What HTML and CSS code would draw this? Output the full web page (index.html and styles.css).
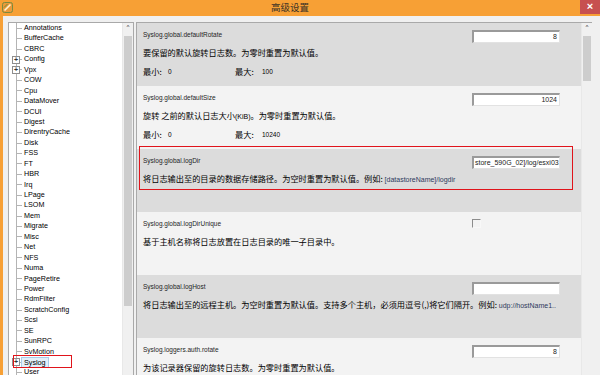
FILE: index.html
```html
<!DOCTYPE html>
<html lang="zh-CN">
<head>
    <meta charset="UTF-8">
    <title>高级设置</title>
    <link rel="stylesheet" href="styles.css">
</head>
<body>
    <div class="titlebar">
        <svg class="app-icon" width="11" height="11" viewBox="0 0 11 11">
            <rect x="0.5" y="0.5" width="10" height="10" rx="2" fill="#e99a3a" stroke="#7a8a3e"/>
            <path d="M2.5 8.5 L8.5 2.5" stroke="#fff3d6" stroke-width="1.6"/>
            <path d="M2 5.5 L5.5 2" stroke="#6f8a3a" stroke-width="1"/>
        </svg>
        <span class="title">高级设置</span>
        <span class="close">×</span>
    </div>

    <div class="frame">
        <div class="tree-pane">
            <ul class="tree">
                <li><span class="twig"></span>Annotations</li>
                <li><span class="twig"></span>BufferCache</li>
                <li><span class="twig"></span>CBRC</li>
                <li><span class="twig"><span class="expander">+</span></span>Config</li>
                <li><span class="twig"><span class="expander">+</span></span>Vpx</li>
                <li><span class="twig"></span>COW</li>
                <li><span class="twig"></span>Cpu</li>
                <li><span class="twig"></span>DataMover</li>
                <li><span class="twig"></span>DCUI</li>
                <li><span class="twig"></span>Digest</li>
                <li><span class="twig"></span>DirentryCache</li>
                <li><span class="twig"></span>Disk</li>
                <li><span class="twig"></span>FSS</li>
                <li><span class="twig"></span>FT</li>
                <li><span class="twig"></span>HBR</li>
                <li><span class="twig"></span>Irq</li>
                <li><span class="twig"></span>LPage</li>
                <li><span class="twig"></span>LSOM</li>
                <li><span class="twig"></span>Mem</li>
                <li><span class="twig"></span>Migrate</li>
                <li><span class="twig"></span>Misc</li>
                <li><span class="twig"></span>Net</li>
                <li><span class="twig"></span>NFS</li>
                <li><span class="twig"></span>Numa</li>
                <li><span class="twig"></span>PageRetire</li>
                <li><span class="twig"></span>Power</li>
                <li><span class="twig"></span>RdmFilter</li>
                <li><span class="twig"></span>ScratchConfig</li>
                <li><span class="twig"></span>Scsi</li>
                <li><span class="twig"></span>SE</li>
                <li><span class="twig"></span>SunRPC</li>
                <li><span class="twig"></span>SvMotion</li>
                <li class="marked"><span class="twig"><span class="expander">+</span></span><span class="selected">Syslog</span><span class="red-mark"></span></li>
                <li><span class="twig"></span>User</li>
            </ul>
            <div class="vscroll">
                <span class="arrow">˄</span>
                <span class="thumb tree-thumb"></span>
            </div>
        </div>

        <div class="content-pane">
            <div class="settings">
                <div class="setting dark">
                    <div class="head">
                        <span class="name">Syslog.global.defaultRotate</span>
                        <span class="field num">8</span>
                    </div>
                    <div class="desc">要保留的默认旋转日志数。为零时重置为默认值。</div>
                    <div class="range">
                        <span class="min"><span class="lbl">最小:</span><span class="val">0</span></span>
                        <span class="lbl wide">最大:</span><span class="val">100</span>
                    </div>
                </div>

                <div class="setting light">
                    <div class="head">
                        <span class="name">Syslog.global.defaultSize</span>
                        <span class="field num">1024</span>
                    </div>
                    <div class="desc">旋转 之前的默认日志大小<span class="en">(KiB)</span>。为零时重置为默认值。</div>
                    <div class="range">
                        <span class="min"><span class="lbl">最小:</span><span class="val">0</span></span>
                        <span class="lbl wide">最大:</span><span class="val">10240</span>
                    </div>
                </div>

                <div class="setting dark marked">
                    <div class="head">
                        <span class="name">Syslog.global.logDir</span>
                        <span class="field text">store_590G_02]/log/esxi03<span class="caret"></span></span>
                    </div>
                    <div class="desc">将日志输出至的目录的数据存储路径。为空时重置为默认值。例如: <span class="en code">[datastoreName]/logdir</span></div>
                    <span class="red-box"></span>
                </div>

                <div class="setting light">
                    <div class="head">
                        <span class="name">Syslog.global.logDirUnique</span>
                        <span class="check-cell"><span class="checkbox"></span></span>
                    </div>
                    <div class="desc">基于主机名称将日志放置在日志目录的唯一子目录中。</div>
                </div>

                <div class="setting dark">
                    <div class="head">
                        <span class="name">Syslog.global.logHost</span>
                        <span class="field num"></span>
                    </div>
                    <div class="desc">将日志输出至的远程主机。为空时重置为默认值。支持多个主机，必须用逗号(,)将它们隔开。例如: <span class="en code">udp://hostName1..</span></div>
                </div>

                <div class="setting light">
                    <div class="head">
                        <span class="name">Syslog.loggers.auth.rotate</span>
                        <span class="field num">8</span>
                    </div>
                    <div class="desc">为该记录器保留的旋转日志数。为零时重置为默认值。</div>
                </div>
            </div>
            <div class="vscroll">
                <span class="arrow">˄</span>
                <span class="thumb content-thumb"></span>
            </div>
        </div>
    </div>
</body>
</html>
```

FILE: styles.css
```css
body {
    margin: 0;
    width: 600px;
    height: 375px;
    overflow: hidden;
    background: #f7a035;
    font-family: "Liberation Sans", "Noto Sans CJK SC", sans-serif;
    color: #000;
}
.titlebar {
    height: 16px;
    display: flex;
    align-items: center;
    position: relative;
}
.app-icon {
    margin-left: 2px;
    margin-top: -2px;
}
.title {
    flex: 1;
    text-align: center;
    font-family: "Noto Sans CJK SC", sans-serif;
    font-size: 9.5px;
    color: #3b3226;
    margin-left: -13px;
    margin-top: -2px;
}
.close {
    width: 20px;
    height: 14px;
    align-self: flex-start;
    background: #c75050;
    color: #fff;
    font-size: 11px;
    line-height: 13px;
    text-align: center;
    font-weight: bold;
}

/* window body */
.frame {
    height: 353px;
    display: flex;
    background: #f0f0f0;
    border-left: 3px solid #f7a035;
    padding: 6px 8px 0 5px;
}

/* left tree */
.tree-pane {
    width: 124px;
    display: flex;
    background: #fff;
    border: 1px solid #a9a9a9;
    border-bottom: none;
}
.tree {
    flex: 1;
    list-style: none;
    margin: 0;
    padding: 0 0 0 3px;
    font-size: 7.2px;
    overflow: hidden;
}
.tree li {
    height: 10.44px;
    line-height: 10.44px;
    display: flex;
    align-items: center;
    white-space: nowrap;
    background-image: linear-gradient(#b4b4b4, #b4b4b4), linear-gradient(#b4b4b4, #b4b4b4);
    background-size: 1px 100%, 6px 1px;
    background-position: 4px 0, 4px 50%;
    background-repeat: no-repeat;
}
.twig {
    width: 12px;
    flex: none;
    display: flex;
    align-items: center;
}
.expander {
    width: 6px;
    height: 6px;
    border: 1px solid #8e8e8e;
    background: #fff;
    font-size: 7px;
    line-height: 6px;
    text-align: center;
    font-weight: bold;
    color: #333;
}
.marked {
    position: relative;
}
.selected {
    margin-left: -3px;
    padding: 0 2px;
    line-height: 9px;
    background: #e3eff9;
    border: 1px solid #a9cbea;
}
.red-mark {
    position: absolute;
    left: 1px;
    top: -2px;
    width: 57px;
    height: 11px;
    border: 1.5px solid #e0141b;
}

/* scrollbars */
.vscroll {
    width: 10px;
    flex: none;
    display: flex;
    flex-direction: column;
    align-items: center;
    background: #f0f0f0;
    border-left: 1px solid #e8e8e8;
}
.arrow {
    height: 13px;
    font-size: 9px;
    line-height: 13px;
    color: #606060;
    font-family: "DejaVu Sans", sans-serif;
}
.thumb {
    width: 8px;
    background: #cdcdcd;
}
.tree-thumb {
    height: 270px;
}
.content-thumb {
    height: 45px;
}

/* right settings */
.content-pane {
    width: 455px;
    margin-left: 2px;
    display: flex;
    border-left: 1px solid #a9a9a9;
    border-top: 1px solid #a9a9a9;
    background: #f3f3f3;
}
.settings {
    flex: 1;
    overflow: hidden;
}
.setting {
    height: 63px;
    padding: 7px 0 0 6px;
    box-sizing: border-box;
}
.setting.dark {
    background: #dcdcdc;
}
.setting.light {
    background: #f3f3f3;
}
.head {
    height: 13px;
    display: flex;
    align-items: flex-start;
}
.name {
    flex: 1;
    font-size: 6.5px;
    line-height: 9px;
    color: #1e1e1e;
}
.field {
    width: 88px;
    height: 13px;
    margin-right: 21px;
    box-sizing: border-box;
    background: #fff;
    border-top: 2px solid #9a9a9a;
    border-left: 2px solid #9a9a9a;
    border-right: 1px solid #e2e2e2;
    border-bottom: 1px solid #e2e2e2;
    font-size: 7px;
    line-height: 10px;
    white-space: nowrap;
    overflow: hidden;
    color: #222;
}
.field.num {
    text-align: right;
    padding-right: 2px;
}
.field.text {
    padding-left: 1px;
}
.caret {
    display: inline-block;
    width: 1px;
    height: 8px;
    background: #000;
    vertical-align: -1px;
}
.check-cell {
    width: 88px;
    margin-right: 21px;
}
.checkbox {
    display: block;
    width: 7px;
    height: 7px;
    border-top: 1px solid #8c8c8c;
    border-left: 1px solid #8c8c8c;
    border-right: 1px solid #f8f8f8;
    border-bottom: 1px solid #f8f8f8;
}
.desc {
    margin-top: 3px;
    height: 12px;
    font-family: "Noto Sans CJK SC", sans-serif;
    font-size: 8.2px;
    line-height: 12px;
    white-space: nowrap;
}
.en {
    font-family: "Liberation Sans", sans-serif;
    font-size: 7px;
}
.code {
    color: #2e3a5c;
}
.range {
    margin-top: 8px;
    display: flex;
    align-items: center;
    height: 10px;
}
.min {
    width: 92px;
    display: flex;
    align-items: center;
}
.lbl {
    width: 25px;
    font-family: "Noto Sans CJK SC", sans-serif;
    font-size: 8.2px;
}
.lbl.wide {
    width: 27px;
}
.val {
    font-size: 6.5px;
}
.setting.marked {
    position: relative;
}
.red-box {
    position: absolute;
    left: 2px;
    top: -3px;
    width: 432px;
    height: 42px;
    border: 1.5px solid #e0141b;
}
```
